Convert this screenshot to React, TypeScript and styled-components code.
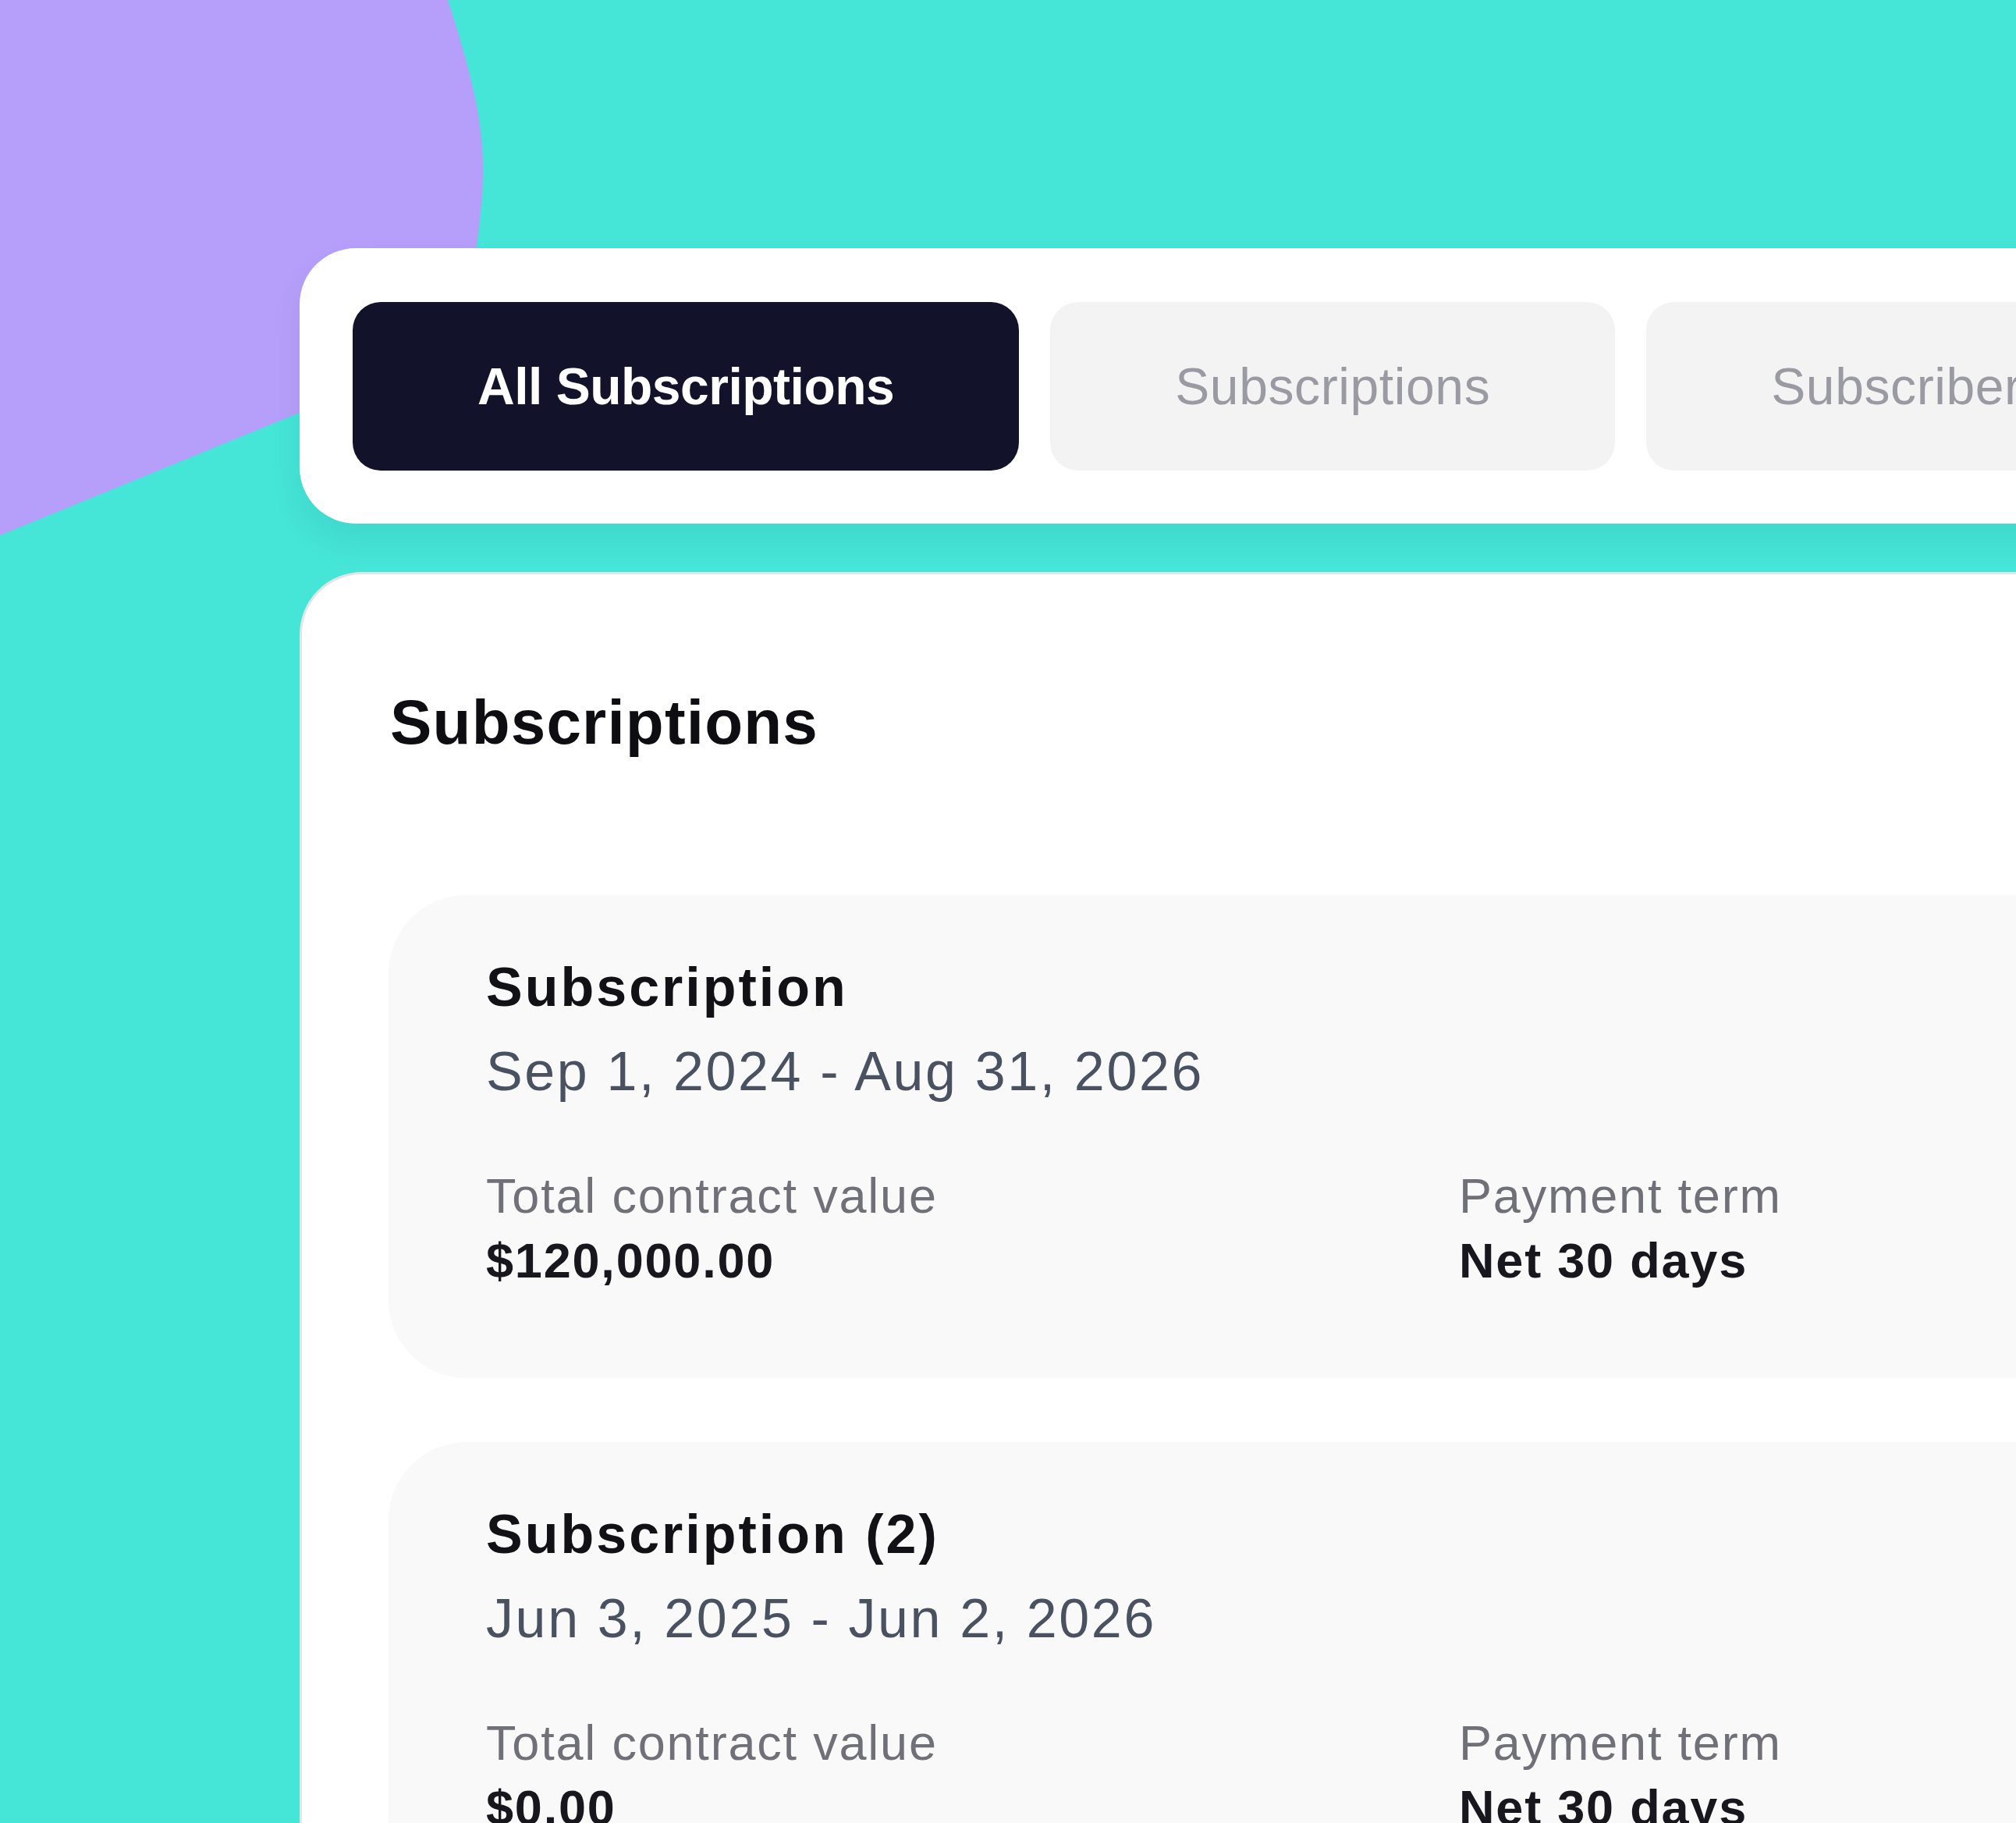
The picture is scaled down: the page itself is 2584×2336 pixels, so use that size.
import React from "react";
import styled, { createGlobalStyle } from "styled-components";

const Global = createGlobalStyle`
  html, body {
    margin: 0;
    padding: 0;
    background: #45e5d8;
  }
  body {
    font-family: "Liberation Sans", Arial, sans-serif;
    overflow: hidden;
  }
  #root {
    width: 2584px;
    height: 2336px;
  }
`;

const Page = styled.div`
  position: relative;
  width: 2584px;
  height: 2336px;
  overflow: hidden;
  background: #45e5d8;
`;

const Blob = styled.svg`
  position: absolute;
  left: 0;
  top: 0;
  width: 800px;
  height: 800px;
  z-index: 0;
`;

const Content = styled.div`
  position: relative;
  z-index: 1;
  display: flex;
  flex-direction: column;
  gap: 62px;
  padding: 318px 0 0 384px;
`;

const TabsCard = styled.div`
  display: flex;
  flex-wrap: nowrap;
  gap: 40px;
  width: 2400px;
  box-sizing: border-box;
  padding: 69px 68px 68px 68px;
  background: #ffffff;
  border-radius: 72px;
  box-shadow: 0 22px 40px rgba(10, 60, 60, 0.08);
`;

const Tab = styled.div<{ $active?: boolean }>`
  flex-shrink: 0;
  height: 216px;
  box-sizing: border-box;
  padding: 0 160px;
  display: flex;
  align-items: center;
  justify-content: center;
  border-radius: 36px;
  background: ${(p) => (p.$active ? "#12122a" : "#f3f3f4")};
  color: ${(p) => (p.$active ? "#ffffff" : "#9a9aa2")};
  font-family: "Liberation Sans", Arial, sans-serif;
  font-size: 66px;
  font-weight: ${(p) => (p.$active ? 700 : 400)};
  letter-spacing: ${(p) => (p.$active ? "-0.5px" : "0.6px")};
  line-height: 1;
  white-space: nowrap;
`;

const MainCard = styled.div`
  width: 2400px;
  box-sizing: border-box;
  padding: 150px 0 0 111px;
  background: #ffffff;
  border: 3px solid #e4e4e4;
  border-radius: 80px;
  min-height: 1700px;
`;

const Heading = styled.h1`
  margin: 0 0 181px 2px;
  font-family: "Liberation Sans", Arial, sans-serif;
  font-size: 80px;
  font-weight: 700;
  letter-spacing: 1.2px;
  line-height: 1;
  color: #0d0d12;
`;

const List = styled.div`
  display: flex;
  flex-direction: column;
  gap: 82px;
`;

const SubCard = styled.div`
  box-sizing: border-box;
  padding: 83px 0 119px 125px;
  background: #f9f9fa;
  border-radius: 100px;
`;

const Title = styled.div`
  font-size: 70px;
  font-weight: 700;
  letter-spacing: 3px;
  line-height: 1;
  color: #111116;
`;

const DateRange = styled.div`
  margin-top: 38px;
  font-size: 70px;
  font-weight: 400;
  letter-spacing: 2.6px;
  line-height: 1;
  color: #4a5261;
`;

const InfoGrid = styled.div`
  margin-top: 93px;
  display: grid;
  grid-template-columns: 1247px auto;
`;

const Field = styled.div`
  display: flex;
  flex-direction: column;
  gap: 20px;
`;

const Label = styled.div`
  font-size: 63px;
  font-weight: 400;
  letter-spacing: 1.8px;
  line-height: 1;
  color: #707078;
`;

const Value = styled.div`
  font-size: 63px;
  font-weight: 700;
  letter-spacing: 1.8px;
  line-height: 1;
  color: #17171d;
`;

type Sub = {
  title: string;
  range: string;
  total: string;
  term: string;
};

const subs: Sub[] = [
  {
    title: "Subscription",
    range: "Sep 1, 2024 - Aug 31, 2026",
    total: "$120,000.00",
    term: "Net 30 days",
  },
  {
    title: "Subscription (2)",
    range: "Jun 3, 2025 - Jun 2, 2026",
    total: "$0.00",
    term: "Net 30 days",
  },
];

export default function App() {
  return (
    <>
      <Global />
      <Page>
        <Blob viewBox="0 0 800 800" xmlns="http://www.w3.org/2000/svg">
          <path
            d="M0 0 H574 C596 70 622 150 619 230 C616 300 604 350 596 442 L0 686 Z"
            fill="#b69ffa"
          />
        </Blob>
        <Content>
          <TabsCard>
            <Tab $active>All Subscriptions</Tab>
            <Tab>Subscriptions</Tab>
            <Tab>Subscribers</Tab>
          </TabsCard>
          <MainCard>
            <Heading>Subscriptions</Heading>
            <List>
              {subs.map((s) => (
                <SubCard key={s.title}>
                  <Title>{s.title}</Title>
                  <DateRange>{s.range}</DateRange>
                  <InfoGrid>
                    <Field>
                      <Label>Total contract value</Label>
                      <Value>{s.total}</Value>
                    </Field>
                    <Field>
                      <Label>Payment term</Label>
                      <Value>{s.term}</Value>
                    </Field>
                  </InfoGrid>
                </SubCard>
              ))}
            </List>
          </MainCard>
        </Content>
      </Page>
    </>
  );
}
